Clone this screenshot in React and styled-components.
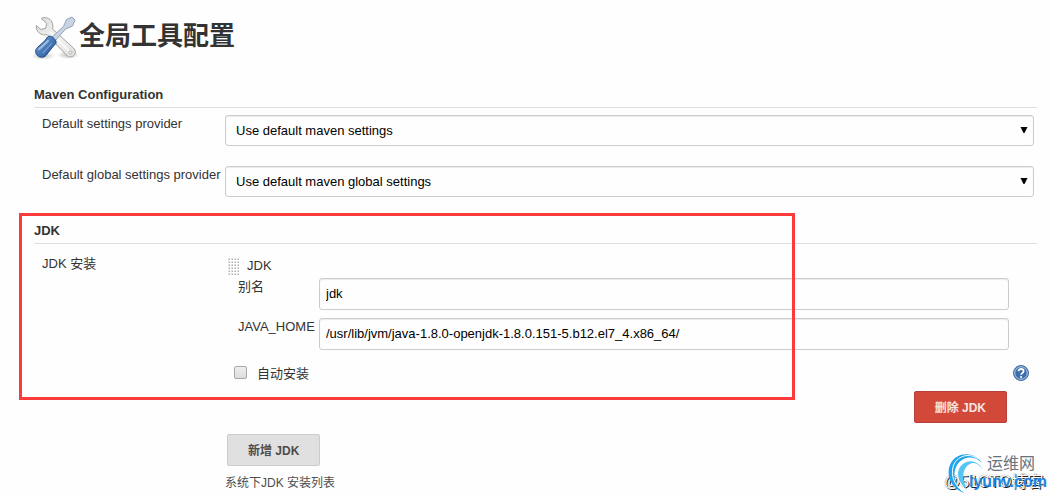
import React from "react"
import styled, { createGlobalStyle } from "styled-components"

const GlobalStyle = createGlobalStyle`
  body {
    margin: 0;
    background: #fefefe;
    color: #333;
    font-family: "Liberation Sans", "Noto Sans CJK SC", sans-serif;
    font-size: 13px;
    line-height: 18px;
  }

  *, *::before, *::after {
    box-sizing: border-box;
  }
`

const Page = styled.main`
  position: relative;
  padding: 0 14px 5px 34px;
`

const Header = styled.header`
  display: flex;
  align-items: center;
  height: 80px;
  padding-bottom: 5px;
`

const Title = styled.h1`
  margin: 0;
  padding-bottom: 4px;
  font-size: 26px;
  line-height: 36px;
`

const ToolsSvg = styled.svg`
  flex: none;
  width: 48px;
  height: 48px;
  margin-left: -3px;
`

const Section = styled.section`
  position: relative;
  margin-bottom: 19px;

  &:last-of-type {
    margin-bottom: 0;
  }
`

const SectionTitle = styled.h2`
  margin: 0;
  height: 28px;
  padding-top: 1px;
  border-bottom: 1px solid #ddd;
  font-size: 13px;
  line-height: 28px;
`

const Rows = styled.div`
  display: grid;
  gap: 20px;
  padding: ${(props) => (props.$loose ? "11px" : "7px")} 3px 0 8px;
`

const Row = styled.div`
  display: grid;
  grid-template-columns: 183px minmax(0, 1fr);
`

const Label = styled.label`
  white-space: nowrap;
`

const SelectWrap = styled.div`
  position: relative;
`

const Select = styled.select`
  appearance: none;
  display: block;
  width: 100%;
  height: 31px;
  padding: 0 24px 0 10px;
  border: 1px solid #ccc;
  border-radius: 3px;
  background: #fefefe;
  box-shadow: inset 0 1px 1px rgba(0, 0, 0, 0.08);
  color: #000;
  font: inherit;
`

const Arrow = styled.svg`
  position: absolute;
  top: 12px;
  right: 6px;
  width: 8px;
  height: 6px;
  pointer-events: none;
`

const Entry = styled.div`
  padding: 2px 5px 0 0;
`

const EntryHeader = styled.div`
  display: flex;
  align-items: center;
  gap: 7px;
  height: 21px;
  padding: 0 0 3px 3px;
`

const Fields = styled.div`
  display: grid;
  gap: 8px;
  padding: 0 20px 0 13px;
`

const Field = styled.div`
  display: grid;
  grid-template-columns: 81px minmax(0, 1fr);
`

const Input = styled.input`
  width: 100%;
  height: 32px;
  padding: 0 6px 2px;
  border: 1px solid #ccc;
  border-radius: 3px;
  background: #fefefe;
  box-shadow: inset 0 1px 1px rgba(0, 0, 0, 0.08);
  color: #000;
  font: inherit;
`

const CheckRow = styled.div`
  display: flex;
  align-items: center;
  gap: 10px;
  margin-top: 14px;
  padding-left: 9px;
  line-height: 20px;
`

const Checkbox = styled.input`
  appearance: none;
  width: 13px;
  height: 13px;
  margin: 0 0 4px;
  border: 1px solid #a8a8a8;
  border-radius: 2px;
  background: linear-gradient(#eee, #ddd);

  &:checked {
    background: #4a76ab;
  }
`

const Help = styled.button`
  width: 16px;
  height: 16px;
  margin: 0 0 2px auto;
  padding: 0;
  border: 0;
  background: none;
  cursor: pointer;

  svg {
    display: block;
  }
`

const Button = styled.button`
  height: 32px;
  padding: 0 20px 2px;
  border: 1px solid ${(props) => (props.$danger ? "#b8403a" : "#ccc")};
  border-radius: 2px;
  background: ${(props) => (props.$danger ? "#d24939" : "#e0e0e0")};
  color: ${(props) => (props.$danger ? "#f6e4e2" : "#4d4d4d")};
  font-family: inherit;
  font-size: 12px;
  font-weight: bold;
  cursor: pointer;
`

const DeleteRow = styled.div`
  display: flex;
  justify-content: flex-end;
  padding: 7px 22px 11px 0;
`

const AddRow = styled.div`
  padding-left: 2px;
`

const Note = styled.p`
  margin: 8px 0 0;
  font-size: 12px;
  color: #4d4d4d;
`

const Highlight = styled.div`
  position: absolute;
  top: -3px;
  left: -15px;
  right: 242px;
  height: 187px;
  border: 3px solid #fb3b3b;
  pointer-events: none;
`

const Watermark = styled.div`
  position: absolute;
  right: 2px;
  bottom: 2px;
  width: 104px;
  height: 44px;
  pointer-events: none;
  white-space: nowrap;
`

const Swirl = styled.svg`
  position: absolute;
  left: 0;
  top: 0;
`

const BlogName = styled.span`
  position: absolute;
  left: -1px;
  top: 22px;
  color: #fff;
  font-size: 16px;
  text-shadow: 1px 1px 0 #222, 0 0 1px #555;
`

const SiteName = styled.span`
  position: absolute;
  left: 42px;
  top: 4px;
  color: #68727c;
  font-size: 16px;
`

const SiteUrl = styled.span`
  position: absolute;
  left: 24px;
  top: 22px;
  color: #1b86e0;
  font-size: 16px;
  font-weight: bold;
`

const ToolsIcon = () => (
  <ToolsSvg viewBox="0 0 48 48" aria-hidden="true">
    <defs>
      <linearGradient id="steel" x1="0" y1="0" x2="1" y2="1">
        <stop offset="0" stopColor="#d8d8d6" />
        <stop offset="0.5" stopColor="#f4f4f3" />
        <stop offset="1" stopColor="#dededc" />
      </linearGradient>
      <linearGradient id="handle" x1="0" y1="0" x2="1" y2="1">
        <stop offset="0" stopColor="#91b3dc" />
        <stop offset="0.45" stopColor="#4c7ebd" />
        <stop offset="1" stopColor="#204a87" />
      </linearGradient>
      <radialGradient id="shade">
        <stop offset="0" stopColor="#000" stopOpacity="0.25" />
        <stop offset="1" stopColor="#000" stopOpacity="0" />
      </radialGradient>
    </defs>
    <ellipse cx="12" cy="42" rx="12" ry="4" fill="url(#shade)" />
    <ellipse cx="37" cy="41" rx="11" ry="4" fill="url(#shade)" />
    <path
      d="M10 4.5C14 2.5 19 4 21 8C22.2 10.5 22 12.8 21.5 15L42.5 34C45 36.5 45 39.5 42.7 41.7C40.5 43.7 37 43 35 40.7L16 20.5C13 21.5 9 20.5 6.8 17.5C5.3 15.5 5 13.4 5.3 11.5L10 15.5L14.8 14.2L15.6 9.3Z"
      fill="url(#steel)"
      stroke="#a3a5a1"
      strokeLinejoin="round"
    />
    <path d="M19 18L38 37" stroke="#fff" strokeWidth="2" opacity="0.7" />
    <circle cx="39.5" cy="38.5" r="1.5" fill="#fff" stroke="#aaa" />
    <path
      d="M32.5 12.5L35.5 5.5L41 3L44 6L41.5 12L34.5 15L23.5 27.5L20 24Z"
      fill="#c9d5e2"
      stroke="#92a2b4"
      strokeLinejoin="round"
    />
    <path
      d="M16.5 23C18 21.6 20.3 22 22.2 23.7C24.7 25.9 26 28.3 24.5 30.1L22.2 32.3L15 41.4C12.8 43.8 8.7 43.8 6.3 41.4C4 39 4 36 6.3 33.6L14 26.6Z"
      fill="url(#handle)"
      stroke="#204a87"
    />
    <path
      d="M17 27L8.2 35.2"
      stroke="#b8d0ef"
      strokeWidth="2"
      strokeLinecap="round"
      opacity="0.75"
    />
    <path
      d="M20.5 29.5L12 39"
      stroke="#7fa6d8"
      strokeWidth="1.5"
      strokeLinecap="round"
      opacity="0.7"
    />
  </ToolsSvg>
)

const Grip = () => (
  <svg width="12" height="17" aria-hidden="true">
    <defs>
      <pattern id="dots" width="3" height="3" patternUnits="userSpaceOnUse">
        <rect width="2" height="2" fill="#dedede" />
        <rect x="1" y="1" width="1" height="1" fill="#aaa" />
      </pattern>
    </defs>
    <rect width="12" height="17" fill="url(#dots)" />
  </svg>
)

const HelpIcon = () => (
  <svg width="16" height="16" viewBox="0 0 16 16" aria-hidden="true">
    <circle cx="8" cy="8" r="7.5" fill="#3465a4" stroke="#3d6aa6" />
    <circle cx="8" cy="8" r="6.3" fill="#3b6cab" stroke="#c5d5e9" />
    <path
      d="M5.5 6.2C5.5 3.2 10.6 3.3 10.6 6.2C10.6 8 8.1 8 8.1 9.8"
      fill="none"
      stroke="#fff"
      strokeWidth="1.8"
    />
    <circle cx="8.1" cy="12" r="1.1" fill="#fff" />
  </svg>
)

const SettingsSelect = ({ id, label, option }) => (
  <Row>
    <Label htmlFor={id}>{label}</Label>
    <SelectWrap>
      <Select id={id}>
        <option>{option}</option>
      </Select>
      <Arrow viewBox="0 0 8 6" aria-hidden="true">
        <path d="M0.5 0H7.5L4.5 6H3.5Z" fill="#000" />
      </Arrow>
    </SelectWrap>
  </Row>
)

const TextField = ({ id, label, value }) => (
  <Field>
    <Label htmlFor={id}>{label}</Label>
    <Input id={id} type="text" defaultValue={value} />
  </Field>
)

const App = () => (
  <>
    <GlobalStyle />
    <Page>
      <Header>
        <ToolsIcon />
        <Title>全局工具配置</Title>
      </Header>
      <Section>
        <SectionTitle>Maven Configuration</SectionTitle>
        <Rows>
          <SettingsSelect
            id="settings"
            label="Default settings provider"
            option="Use default maven settings"
          />
          <SettingsSelect
            id="global-settings"
            label="Default global settings provider"
            option="Use default maven global settings"
          />
        </Rows>
      </Section>
      <Section>
        <SectionTitle>JDK</SectionTitle>
        <Rows $loose>
          <Row>
            <span>JDK 安装</span>
            <div>
              <Entry>
                <EntryHeader>
                  <Grip />
                  <span>JDK</span>
                </EntryHeader>
                <Fields>
                  <TextField id="jdk-name" label="别名" value="jdk" />
                  <TextField
                    id="java-home"
                    label="JAVA_HOME"
                    value="/usr/lib/jvm/java-1.8.0-openjdk-1.8.0.151-5.b12.el7_4.x86_64/"
                  />
                </Fields>
                <CheckRow>
                  <Checkbox id="auto-install" type="checkbox" />
                  <Label id="auto-install-label" htmlFor="auto-install">
                    自动安装
                  </Label>
                  <Help type="button" aria-labelledby="auto-install-label">
                    <HelpIcon />
                  </Help>
                </CheckRow>
                <DeleteRow>
                  <Button type="button" $danger>
                    删除 JDK
                  </Button>
                </DeleteRow>
              </Entry>
              <AddRow>
                <Button type="button">新增 JDK</Button>
              </AddRow>
              <Note>系统下JDK 安装列表</Note>
            </div>
          </Row>
        </Rows>
        <Highlight />
      </Section>
      <Watermark>
        <BlogName>@51CTO博客</BlogName>
        <Swirl width="42" height="44" viewBox="0 0 42 44" aria-hidden="true">
          <path
            d="M37 12C29-1 8 0 4 17C2 27 7 37 19 42C9 33 7 23 12 14C18 5 29 4 37 12Z"
            fill="#1da5ee"
          />
          <path
            d="M38 19C32 7 19 8 14 18C11 25 15 33 22 39C17 28 17 21 22 15C27 10 33 11 38 19Z"
            fill="#54c5f5"
          />
          <path
            d="M33 8C24 1 11 5 8 16C6 25 9 33 17 40M35 13C27 5 17 9 13 18C11 25 14 32 20 38"
            fill="none"
            stroke="#fff"
          />
        </Swirl>
        <SiteName>运维网</SiteName>
        <SiteUrl>lyunv.com</SiteUrl>
      </Watermark>
    </Page>
  </>
)

export default App
